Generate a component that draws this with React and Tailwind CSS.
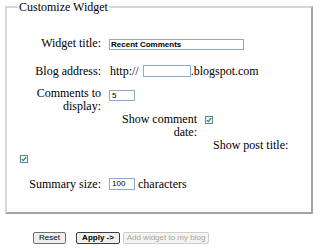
import React from "react";

function Check({ className = "" }) {
  return (
    <span className={"inline-flex w-[8px] h-[8px] border border-[#5b7fb5] bg-[#f4f6f8] items-center justify-center shrink-0 " + className}>
      <svg width="6" height="6" viewBox="0 0 6 6">
        <path d="M0.8 3.1 L2.3 4.6 L5.2 1.2" fill="none" stroke="#1e9a1e" strokeWidth="1.3" />
      </svg>
    </span>
  );
}

export default function App() {
  return (
    <div className="w-[320px] h-[250px] bg-white text-black [font-family:'Liberation_Serif',serif] text-[12px] overflow-hidden">
      <fieldset className="ml-[5px] w-[308px] h-[214px] border-2 border-solid border-t-[#d6d6d2] border-l-[#d6d6d2] border-r-[#a3a39c] border-b-[#a3a39c]">
        <legend className="ml-[11px] px-[1px] leading-[14px]">Customize Widget</legend>

        <div className="flex items-start mt-[22px]">
          <div className="w-[94px] text-right leading-[14px]">Widget title:</div>
          <div className="ml-[8px] mt-[3px] w-[135px] h-[11px] border border-[#8fa9c9] flex items-center pl-[1px] [font-family:'Liberation_Sans',sans-serif] font-bold text-[8px] leading-none">
            Recent Comments
          </div>
        </div>

        <div className="flex items-start mt-[14px]">
          <div className="w-[94px] text-right leading-[14px]">Blog address:</div>
          <div className="ml-[9px] leading-[14px]">http://</div>
          <div className="ml-[4px] w-[48px] h-[12px] border border-[#8fa9c9] mt-[1px]"></div>
          <div className="leading-[14px]">.blogspot.com</div>
        </div>

        <div className="flex items-start mt-[9px]">
          <div className="w-[94px] text-right leading-[13px]">Comments to<br />display:</div>
          <div className="ml-[8px] mt-[3px] w-[26px] h-[11px] border border-[#8fa9c9] flex items-center pl-[2px] [font-family:'Liberation_Sans',sans-serif] text-[8px] leading-none">
            5
          </div>
        </div>

        <div className="flex items-start pl-[96px]">
          <div className="w-[94px] text-right leading-[13px]">Show comment<br />date:</div>
          <Check className="ml-[8px] mt-[3px]" />
        </div>

        <div className="pl-[206px] leading-[13px]">Show post title:</div>

        <div className="flex mt-[3px] pl-[13px]">
          <Check />
        </div>

        <div className="flex items-start mt-[14px]">
          <div className="w-[94px] text-right leading-[14px]">Summary size:</div>
          <div className="ml-[8px] mt-[1px] w-[26px] h-[12px] border border-[#8fa9c9] flex items-center pl-[2px] [font-family:'Liberation_Sans',sans-serif] text-[8px] leading-none">
            100
          </div>
          <div className="ml-[3px] leading-[14px]">characters</div>
        </div>
      </fieldset>

      <div className="flex items-start mt-[18px] pl-[33px] [font-family:'Liberation_Sans',sans-serif] text-[8px]">
        <div className="w-[33px] h-[12px] border border-[#6f6f6f] rounded-[2px] bg-[#eeeeea] flex items-center justify-center">Reset</div>
        <div className="ml-[10px] w-[44px] h-[12px] border border-[#3c3c3c] rounded-[2px] bg-[#eeeeea] flex items-center justify-center font-bold">Apply -&gt;</div>
        <div className="ml-[3px] w-[86px] h-[12px] border border-[#cfcfc8] rounded-[2px] bg-[#f3f3ef] flex items-center justify-center text-[#a8a8a0]">Add widget to my blog</div>
      </div>
    </div>
  );
}
